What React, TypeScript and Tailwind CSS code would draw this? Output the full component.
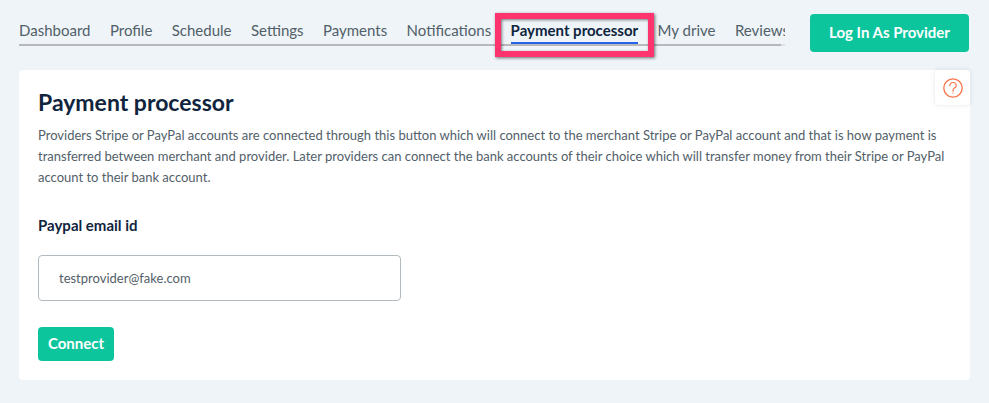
const tabs = [
  'Dashboard',
  'Profile',
  'Schedule',
  'Settings',
  'Payments',
  'Notifications',
  'Payment processor',
  'My drive',
  'Reviews',
];

const activeTab = 'Payment processor';

function TabBar() {
  return (
    <nav aria-label="Account sections" className="min-w-0 flex-1 overflow-x-clip pt-1">
      <ul className="flex h-6 w-[770px] justify-between whitespace-nowrap">
        {tabs.map((tab) =>
          tab === activeTab ? (
            <li key={tab} className="relative z-10">
              <a
                href="#"
                aria-current="page"
                className="block h-[26px] border-b-2 border-[#2563eb] text-[15px] leading-6 font-bold text-[#10243e]"
              >
                {tab}
              </a>
              <span className="pointer-events-none absolute -inset-x-4 -top-[5px] h-11 border-6 border-[#fd346e] shadow-[1px_1px_3px_rgba(0,0,0,0.55),inset_1px_1px_3px_rgba(0,0,0,0.5)]" />
            </li>
          ) : (
            <li key={tab}>
              <a href="#" className="block text-[15px] leading-6 text-[#526069]">
                {tab}
              </a>
            </li>
          ),
        )}
      </ul>
      <div className="mt-0.5 flex h-0.5">
        <div className="flex-1 bg-[#b8b8ba]" />
        <div className="w-1 bg-[#dfe2e5]" />
      </div>
    </nav>
  );
}

function HelpIcon() {
  return (
    <svg
      viewBox="0 0 20 20"
      className="size-5"
      fill="none"
      stroke="#fb7449"
      strokeLinecap="round"
      strokeLinejoin="round"
      aria-hidden="true"
    >
      <circle cx="10" cy="10" r="9.2" strokeWidth="1.3" />
      <path
        d="M6.9 7.7c0-1.9 1.3-3.2 3.1-3.2s3.2 1.2 3.2 3c0 1.3-.8 2-1.7 2.6-.9.6-1.4 1.1-1.4 2.2v.9"
        strokeWidth="1.2"
      />
      <circle cx="10" cy="15.1" r=".7" fill="#fb7449" stroke="none" />
    </svg>
  );
}

export default function App() {
  return (
    <div className="min-h-screen bg-[#eef4f8] px-[19px] pt-3.5 pb-6 font-['Lato',sans-serif]">
      <header className="flex items-start gap-[25px]">
        <TabBar />
        <button
          type="button"
          className="mr-px h-[38px] w-[159px] shrink-0 rounded bg-[#0dc59d] pb-0.5 text-[15px] font-bold text-white"
        >
          Log In As Provider
        </button>
      </header>

      <main className="relative mt-[18px] rounded bg-white px-[19px] pt-[18px] pb-[19px]">
        <button
          type="button"
          aria-label="Help"
          className="absolute top-0 right-0 flex size-[35px] items-center justify-center rounded bg-white shadow-[0_0_4px_rgba(60,80,100,0.15)]"
        >
          <HelpIcon />
        </button>

        <h1 className="text-[23px] leading-7 font-bold text-[#10243e]">Payment processor</h1>
        <p className="mt-[9px] text-[13px] leading-[21px] text-[#526069]">
          Providers Stripe or PayPal accounts are connected through this button which will connect to
          the merchant Stripe or PayPal account and that is how payment is transferred between
          merchant and provider. Later providers can connect the bank accounts of their choice which
          will transfer money from their Stripe or PayPal account to their bank account.
        </p>

        <form className="mt-[27px] flex flex-col items-start" onSubmit={(e) => e.preventDefault()}>
          <label htmlFor="paypal-email" className="text-[15px] leading-5 font-bold text-[#10243e]">
            Paypal email id
          </label>
          <input
            id="paypal-email"
            type="email"
            defaultValue="testprovider@fake.com"
            className="mt-5 h-[46px] w-full max-w-[363px] rounded border border-[#b4bbc0] bg-white px-5 text-[13px] text-[#526069]"
          />
          <button
            type="submit"
            className="mt-[26px] h-[34px] w-[76px] rounded bg-[#0dc59d] pb-0.5 text-[15px] font-bold text-white"
          >
            Connect
          </button>
        </form>
      </main>
    </div>
  );
}
